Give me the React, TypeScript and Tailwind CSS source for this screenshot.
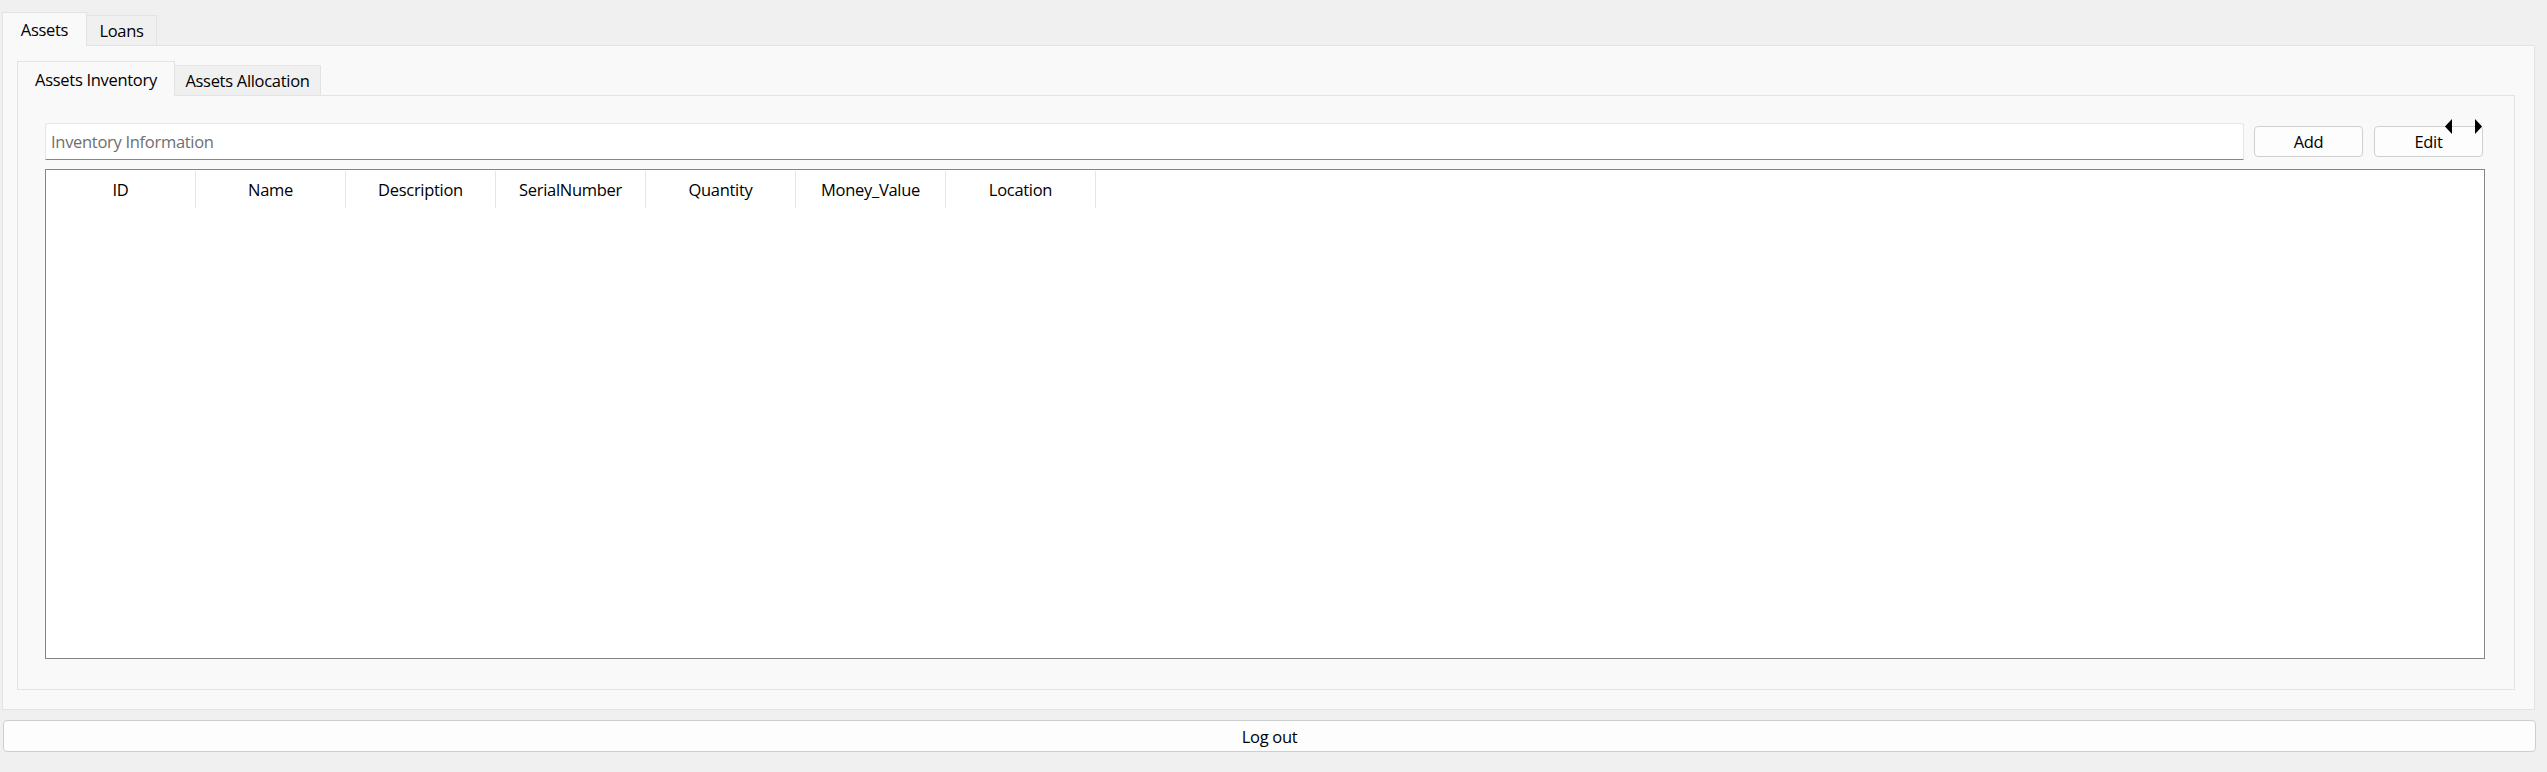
import React, { FC } from "react";

const columns = ["ID", "Name", "Description", "SerialNumber", "Quantity", "Money_Value", "Location"];

const ScrollArrows: FC = () => (
  <>
    <svg className="absolute left-[71px] top-[-7px]" width="8" height="15" viewBox="0 0 8 15">
      <polygon points="7,0 7,15 0,7.5" fill="#000" />
    </svg>
    <svg className="absolute left-[101px] top-[-7px]" width="8" height="15" viewBox="0 0 8 15">
      <polygon points="0,0 0,15 7,7.5" fill="#000" />
    </svg>
  </>
);

const App: FC = () => {
  return (
    <div className="w-[2547px] h-[772px] bg-[#f0f0f0] flex flex-col text-[16.5px] tracking-[-0.3px] text-black font-['Segoe_UI','Open_Sans',sans-serif]">
      {/* outer tab widget */}
      <div className="pl-[2px] pr-[12px] pt-[12px] flex flex-col">
        <div className="flex items-end h-[33px]">
          <div className="relative z-10 -mb-px h-[34px] w-[85px] pt-[2px] flex items-center justify-center bg-[#f9f9f9] border border-b-0 border-[#e3e3e3]">
            Assets
          </div>
          <div className="h-[30px] w-[70px] pt-[2px] flex items-center justify-center bg-[#f0f0f0] border-t border-r border-[#e3e3e3]">
            Loans
          </div>
        </div>

        <div className="h-[665px] bg-[#f9f9f9] border border-[#e3e3e3] pl-[14px] pr-[19px] pt-[15px] flex flex-col">
          {/* inner tab widget */}
          <div className="flex items-end h-[34px]">
            <div className="relative z-10 -mb-px h-[35px] w-[158px] pt-[2px] flex items-center justify-center bg-[#f9f9f9] border border-b-0 border-[#e3e3e3]">
              Assets Inventory
            </div>
            <div className="h-[30px] w-[146px] pt-[2px] flex items-center justify-center bg-[#f0f0f0] border-t border-r border-[#e3e3e3]">
              Assets Allocation
            </div>
          </div>

          <div className="h-[595px] bg-[#f9f9f9] border border-[#e3e3e3] pl-[27px] pr-[29px] pt-[27px] flex flex-col">
            <div className="flex items-center h-[37px] pr-[2px]">
              <div className="flex-1 h-[37px] pt-[2px] bg-white border border-[#e5e5e5] border-b-[#868686] rounded-t-[3px] flex items-center pl-[5px] text-[#6f6f6f]">
                Inventory Information
              </div>
              <button className="ml-[10px] w-[109px] h-[31px] pt-[2px] bg-[#fdfdfd] border border-[#d0d0d0] rounded-[4px] flex items-center justify-center">
                Add
              </button>
              <div className="relative ml-[11px]">
                <button className="w-[109px] h-[31px] pt-[2px] bg-[#fdfdfd] border border-[#d0d0d0] rounded-[4px] flex items-center justify-center">
                  Edit
                </button>
                <ScrollArrows />
              </div>
            </div>

            <div className="mt-[9px] h-[490px] bg-white border border-[#82868a]">
              <div className="flex h-[38px] pt-[1px]">
                {columns.map((c) => (
                  <div
                    key={c}
                    className="w-[150px] h-full pt-[2px] flex items-center justify-center border-r border-[#e5e5e5]"
                  >
                    {c}
                  </div>
                ))}
              </div>
            </div>
          </div>
        </div>
      </div>

      <div className="pl-[3px] pr-[11px] pt-[10px]">
        <button className="w-full h-[32px] pt-[2px] bg-[#fdfdfd] border border-[#cfcfcf] rounded-[4px] flex items-center justify-center">
          Log out
        </button>
      </div>
    </div>
  );
};

export default App;
